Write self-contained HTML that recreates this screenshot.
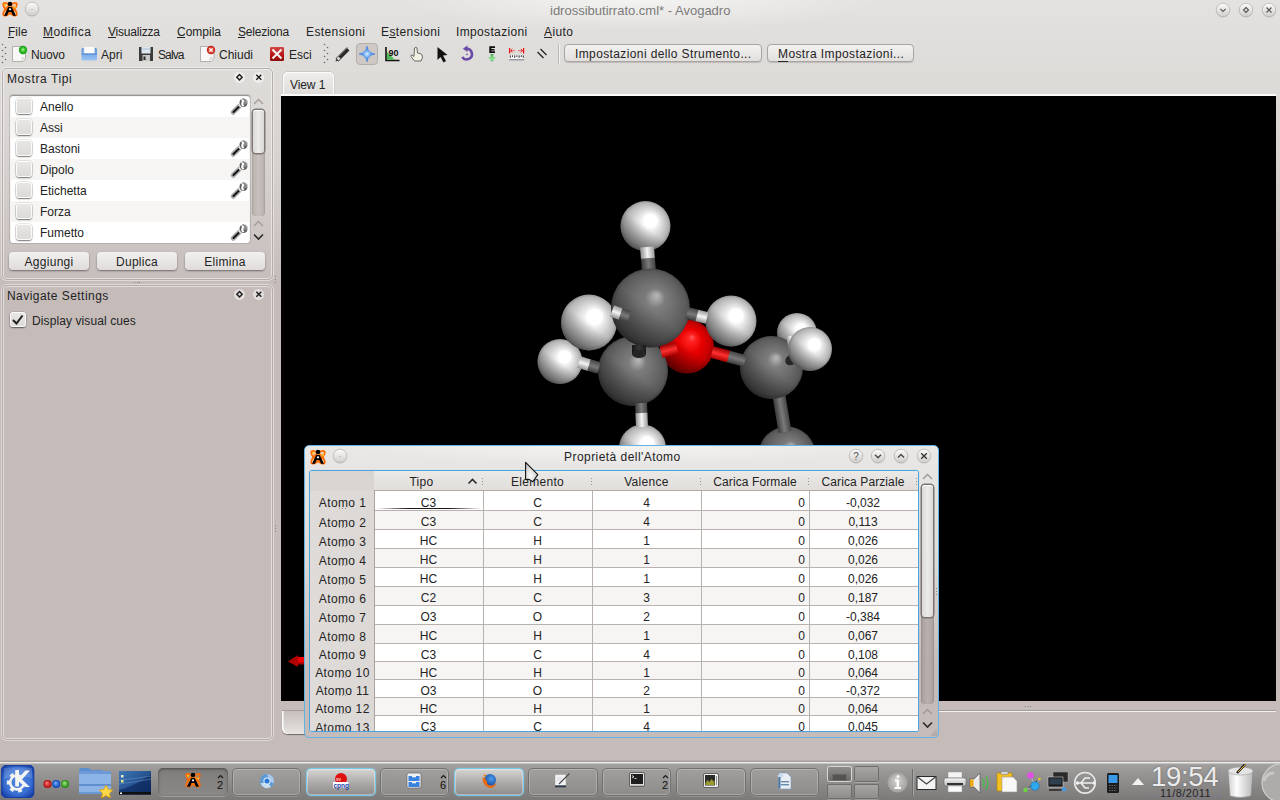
<!DOCTYPE html>
<html><head><meta charset="utf-8">
<style>
*{margin:0;padding:0;box-sizing:border-box}
html,body{width:1280px;height:800px;overflow:hidden}
body{position:relative;font-family:"Liberation Sans",sans-serif;font-size:12px;color:#232323;
background:linear-gradient(to bottom,#e3e2e0 0px,#dcd9d6 100px,#d6d1ce 170px,#c5bcba 290px,#c5bcba 800px);}
.a{position:absolute}
.t{position:absolute;white-space:nowrap;line-height:1}
.wbtn{position:absolute;width:14px;height:14px;border-radius:50%;
background:radial-gradient(circle at 50% 35%,#fbfbfb 0,#e8e6e4 45%,#bdbab7 100%);box-shadow:0 1px 1px rgba(0,0,0,.25)}
.btn{position:absolute;border:1px solid #a9a5a2;border-radius:4px;background:linear-gradient(#f3f2f1,#e2dfdd);box-shadow:0 1px 1px rgba(0,0,0,.15)}
.btn2{position:absolute;border-radius:4px;background:linear-gradient(#f2f1f0,#dedbd9);box-shadow:0 1px 2px rgba(0,0,0,.45)}
.panel{position:absolute;border:1px solid #c0b9b6;border-radius:4px;box-shadow:inset 0 1px 0 rgba(255,255,255,.6)}
.cb{position:absolute;width:15px;height:15px;border-radius:3.5px;background:linear-gradient(#e9e7e5,#dcd9d7);box-shadow:inset 0 0 0 1px rgba(255,255,255,.85),0 1px 1.5px rgba(0,0,0,.5),0 0 0 .5px rgba(0,0,0,.15)}
.ul{position:absolute;height:1px;background:#232323}
.tb{position:absolute;background:linear-gradient(#a19e9c,#7b7978)}

</style></head><body>
<!-- ===== Title bar ===== -->
<div class="a" style="left:400px;top:0;width:480px;height:30px;background:radial-gradient(ellipse 50% 100% at 50% 0,rgba(255,255,255,.6),rgba(255,255,255,0))"></div>
<div class="t" style="left:550px;top:4px;font-size:13px;color:#7c7b7a">idrossibutirrato.cml* - Avogadro</div>
<svg class="a" style="left:0;top:0" width="20" height="18" viewBox="0 0 20 18"><ellipse cx="10" cy="9.2" rx="8.8" ry="3.3" transform="rotate(42 10 9.2)" fill="#ff9a30" fill-opacity=".35" stroke="#ff6a00" stroke-width="1.7"/>
<ellipse cx="10" cy="9.2" rx="8.8" ry="3.3" transform="rotate(-42 10 9.2)" fill="#ff9a30" fill-opacity=".35" stroke="#ff6a00" stroke-width="1.7"/>
<circle cx="10" cy="4" r="2.3" fill="#000"/>
<path d="M8.2 7 L4 15.8 H7 L8.6 12 H11.4 L13 15.8 H16 L11.8 7 Z" fill="#000"/>
<circle cx="10" cy="9.3" r="1.1" fill="#fff"/>
<circle cx="5" cy="4.8" r="1.1" fill="#ffc020"/><circle cx="15.2" cy="7.5" r="1.1" fill="#ffc020"/></svg>
<svg class="a" style="left:24.299999999999997px;top:1.3000000000000007px" width="16" height="17" viewBox="0 0 16 17"><defs><linearGradient id="wbg" x1="0" y1="0" x2="0" y2="1"><stop offset="0" stop-color="#fbfbfb"/><stop offset=".55" stop-color="#e4e2e0"/><stop offset="1" stop-color="#cfccca"/></linearGradient></defs><circle cx="8" cy="8.8" r="7" fill="#bdbab8" opacity=".45"/><circle cx="8" cy="8" r="6.8" fill="url(#wbg)" stroke="#b2afad" stroke-width=".7"/><circle cx="8" cy="8.5" r=".6" fill="#999"/></svg>
<svg class="a" style="left:1215px;top:1.5px" width="16" height="17" viewBox="0 0 16 17"><defs><linearGradient id="wbg" x1="0" y1="0" x2="0" y2="1"><stop offset="0" stop-color="#fbfbfb"/><stop offset=".55" stop-color="#e4e2e0"/><stop offset="1" stop-color="#cfccca"/></linearGradient></defs><circle cx="8" cy="8.8" r="7" fill="#bdbab8" opacity=".45"/><circle cx="8" cy="8" r="6.8" fill="url(#wbg)" stroke="#b2afad" stroke-width=".7"/><path d="M5.3 6.8 L8 9.5 L10.7 6.8" fill="none" stroke="#555" stroke-width="1.1"/></svg>
<svg class="a" style="left:1238px;top:1.5px" width="16" height="17" viewBox="0 0 16 17"><defs><linearGradient id="wbg" x1="0" y1="0" x2="0" y2="1"><stop offset="0" stop-color="#fbfbfb"/><stop offset=".55" stop-color="#e4e2e0"/><stop offset="1" stop-color="#cfccca"/></linearGradient></defs><circle cx="8" cy="8.8" r="7" fill="#bdbab8" opacity=".45"/><circle cx="8" cy="8" r="6.8" fill="url(#wbg)" stroke="#b2afad" stroke-width=".7"/><path d="M8 5.5 L10.5 8 L8 10.5 L5.5 8 Z" fill="none" stroke="#555" stroke-width="1.1"/></svg>
<svg class="a" style="left:1261px;top:1.5px" width="16" height="17" viewBox="0 0 16 17"><defs><linearGradient id="wbg" x1="0" y1="0" x2="0" y2="1"><stop offset="0" stop-color="#fbfbfb"/><stop offset=".55" stop-color="#e4e2e0"/><stop offset="1" stop-color="#cfccca"/></linearGradient></defs><circle cx="8" cy="8.8" r="7" fill="#bdbab8" opacity=".45"/><circle cx="8" cy="8" r="6.8" fill="url(#wbg)" stroke="#b2afad" stroke-width=".7"/><path d="M5.5 5.5 L10.5 10.5 M10.5 5.5 L5.5 10.5" fill="none" stroke="#555" stroke-width="1.1"/></svg>
<!-- ===== Menu ===== -->
<div class="t" style="left:8px;top:25.5px;letter-spacing:0px">File</div>
<div class="t" style="left:43px;top:25.5px;letter-spacing:0.45px">Modifica</div>
<div class="t" style="left:108px;top:25.5px;letter-spacing:-0.2px">Visualizza</div>
<div class="t" style="left:177px;top:25.5px;letter-spacing:0px">Compila</div>
<div class="t" style="left:238px;top:25.5px;letter-spacing:-0.2px">Seleziona</div>
<div class="t" style="left:306px;top:25.5px;letter-spacing:0.4px">Estensioni</div>
<div class="t" style="left:381px;top:25.5px;letter-spacing:0.4px">Estensioni</div>
<div class="t" style="left:456px;top:25.5px;letter-spacing:0.35px">Impostazioni</div>
<div class="t" style="left:544px;top:25.5px;letter-spacing:0.4px">Aiuto</div>
<div class="ul" style="left:8px;top:37px;width:6px"></div>
<div class="ul" style="left:43px;top:37px;width:11px"></div>
<div class="ul" style="left:108px;top:37px;width:8px"></div>
<div class="ul" style="left:177px;top:37px;width:8px"></div>
<div class="ul" style="left:238px;top:37px;width:7px"></div>
<div class="ul" style="left:389px;top:37px;width:7px"></div>
<div class="ul" style="left:544px;top:37px;width:8px"></div>
<!-- ===== Toolbar ===== -->
<svg class="a" style="left:0;top:40px" width="600" height="28" viewBox="0 40 600 28"><defs>
<radialGradient id="grn" cx=".5" cy=".5" r=".5" fx=".5" fy=".45"><stop offset="0" stop-color="#c9f0c0"/><stop offset=".35" stop-color="#4fd03a"/><stop offset="1" stop-color="#0c9a10"/></radialGradient>
<radialGradient id="red" cx=".5" cy=".5" r=".5"><stop offset="0" stop-color="#fff"/><stop offset=".3" stop-color="#f07050"/><stop offset="1" stop-color="#c01010"/></radialGradient>
<linearGradient id="blu" x1="0" y1="0" x2="0" y2="1"><stop offset="0" stop-color="#5c94de"/><stop offset="1" stop-color="#9cc4f4"/></linearGradient>
<linearGradient id="rbox" x1="0" y1="0" x2="0" y2="1"><stop offset="0" stop-color="#d04848"/><stop offset=".6" stop-color="#b81010"/><stop offset="1" stop-color="#8a0a0a"/></linearGradient>
<radialGradient id="star" cx=".5" cy=".5" r=".5"><stop offset="0" stop-color="#d8ecff"/><stop offset=".5" stop-color="#5aa0f0"/><stop offset="1" stop-color="#2a6ad8"/></radialGradient>
</defs><circle cx="2.5" cy="44.5" r="0.8" fill="#6f6b69"/><circle cx="2.5" cy="50.5" r="0.8" fill="#6f6b69"/><circle cx="2.5" cy="56.5" r="0.8" fill="#6f6b69"/><circle cx="2.5" cy="62.5" r="0.8" fill="#6f6b69"/><circle cx="5.5" cy="47.5" r="0.8" fill="#6f6b69"/><circle cx="5.5" cy="53.5" r="0.8" fill="#6f6b69"/><circle cx="5.5" cy="59.5" r="0.8" fill="#6f6b69"/><path d="M12.5 46.5 H22 L25.5 50 V58.5 L23 61.5 H12.5 Z" fill="#f8f8f8" stroke="#b0adab" stroke-width="1"/><path d="M21 61 L25 57 L22 57.5 Z" fill="#d0d0d0"/><circle cx="23" cy="50" r="4.2" fill="url(#grn)"/><rect x="81.5" y="48" width="15.5" height="12.5" rx="1.5" fill="url(#blu)"/><rect x="84" y="46.5" width="10.5" height="7" fill="#fbfbfb" stroke="#d8d8d8" stroke-width=".6"/><rect x="81.5" y="53.5" width="15.5" height="1" fill="#4a82d0"/><path d="M139 47 H153 V61 H139 Z" fill="#3a3a3a"/><rect x="141.5" y="47" width="9" height="6.5" fill="#dfe6ee"/><rect x="141.5" y="48.5" width="9" height="1" fill="#aac0d8"/><rect x="142.5" y="55" width="7.5" height="6" fill="#c8c8c8"/><rect x="143.5" y="56.5" width="2" height="3.5" fill="#2a2a2a"/><path d="M200.5 46.5 H209 L214 51 V58.5 L211 61.5 H200.5 Z" fill="#f8f8f8" stroke="#b0adab" stroke-width="1"/><path d="M209 61 L213.5 57 L210 57.5 Z" fill="#d0d0d0"/><circle cx="211" cy="50" r="4.2" fill="url(#red)"/><path d="M209.3 48.3 L212.7 51.7 M212.7 48.3 L209.3 51.7" stroke="#fff" stroke-width="1.2"/><rect x="270" y="47" width="14" height="14" rx="1.2" fill="url(#rbox)"/><path d="M272.5 49.5 L281.5 58.5 M281.5 49.5 L272.5 58.5" stroke="#f2f2f2" stroke-width="2.2"/><circle cx="324.5" cy="44.5" r="0.8" fill="#6f6b69"/><circle cx="324.5" cy="50.5" r="0.8" fill="#6f6b69"/><circle cx="324.5" cy="56.5" r="0.8" fill="#6f6b69"/><circle cx="324.5" cy="62.5" r="0.8" fill="#6f6b69"/><circle cx="327.5" cy="47.5" r="0.8" fill="#6f6b69"/><circle cx="327.5" cy="53.5" r="0.8" fill="#6f6b69"/><circle cx="327.5" cy="59.5" r="0.8" fill="#6f6b69"/><path d="M337 60 L348 49" stroke="#2a2a2a" stroke-width="4" /><path d="M335.5 61.5 L338.5 60.8 L336.2 58.5 Z" fill="#3a3a3a"/><path d="M337.5 59.5 L339.5 57.5" stroke="#d8d8d8" stroke-width="3"/><path d="M338 57 L347.5 47.5" stroke="#707070" stroke-width="1"/><rect x="356.5" y="43.5" width="21" height="21" rx="3.5" fill="#cfc9c6" stroke="#b5afac" stroke-width="1"/><path d="M367 46 Q368 53 375 54 Q368 55 367 62 Q366 55 359 54 Q366 53 367 46 Z" fill="url(#star)" stroke="#3a78e0" stroke-width=".5"/><path d="M386 47 V60.5 H399.5" fill="none" stroke="#111" stroke-width="1.6"/><path d="M387 52 L395 59.8 H387 Z" fill="#4cbb55"/><text x="388.5" y="56" font-family="Liberation Sans" font-weight="bold" font-size="9" fill="#111">90</text><path d="M414.5 48 Q416 46.5 417 48 L417.5 53 L420 53.5 Q423 54.5 422.5 57.5 L421 61 H414.5 L411 56.5 Q410.5 55 412 55 L414 56.5 Z" fill="#f4f0e2" stroke="#5a5a5a" stroke-width=".9"/><path d="M437.5 47 L437.5 60 L440.5 57 L443.5 62.5 L446 61 L443 55.5 L447.5 55 Z" fill="#111"/><path d="M466 48.8 A5.3 5.3 0 1 1 462.2 57" fill="none" stroke="#6a4aa8" stroke-width="2.6"/><path d="M462.8 48.8 L467.5 45.6 L467.5 52 Z" fill="#6a4aa8"/><circle cx="467" cy="54.3" r="0.9" fill="#6a4aa8"/><path d="M489.3 46.3 H495 V48 H491.3 V48.9 H494.5 V50.4 H491.3 V51.3 H495 V53 H489.3 Z" fill="#0a0a0a"/><defs><linearGradient id="garr" x1="0" y1="0" x2="0" y2="1"><stop offset="0" stop-color="#5aa860"/><stop offset=".7" stop-color="#8ce890"/><stop offset="1" stop-color="#2a7a30"/></linearGradient></defs><path d="M490.5 54 H493.5 V57.3 H496 L492 61.8 L488 57.3 H490.5 Z" fill="url(#garr)"/><path d="M509.6 48 V53.5 M523.6 48 V53.5" stroke="#e81010" stroke-width="1.2"/><path d="M510.5 50.7 H515.2 M518 50.7 H522.8" stroke="#e86a6a" stroke-width="1"/><path d="M512.3 49 L510.6 50.7 L512.3 52.4 M520.9 49 L522.6 50.7 L520.9 52.4" fill="none" stroke="#e81010" stroke-width="1"/><rect x="509" y="55" width="15.2" height="4" fill="#f4f4f4"/><path d="M510.3 55.3 V57.8 M512.5 55.3 V57 M514.7 55.3 V57.8 M516.9 55.3 V57 M519.1 55.3 V57.8 M521.3 55.3 V57 M523.3 55.3 V57.8" stroke="#222" stroke-width=".9"/><rect x="509" y="59" width="15.2" height="1.5" fill="#9a9aa2"/><path d="M537.5 52 L543.5 58 M540.5 49 L546.5 55" stroke="#222" stroke-width="1.3"/><rect x="558" y="44" width="1" height="20" fill="#bfbab7"/><rect x="559" y="44" width="1" height="20" fill="#f2f0ee"/></svg>
<div class="t" style="left:31px;top:49px;letter-spacing:-.2px">Nuovo</div>
<div class="t" style="left:101px;top:49px">Apri</div>
<div class="t" style="left:158px;top:49px;letter-spacing:-.9px">Salva</div>
<div class="t" style="left:219px;top:49px">Chiudi</div>
<div class="t" style="left:289px;top:49px">Esci</div>
<div class="btn" style="left:564px;top:44px;width:198px;height:18px"></div>
<div class="t" style="left:575px;top:48px;letter-spacing:.38px">Impostazioni dello Strumento...</div>
<div class="btn" style="left:767px;top:44px;width:147px;height:18px"></div>
<div class="t" style="left:778px;top:48px;letter-spacing:.4px">Mostra Impostazioni...</div>
<div class="ul" style="left:778px;top:61px;width:10px"></div>
<!-- ===== Left docks ===== -->
<div class="a" style="left:2px;top:68px;width:271px;height:212px;border-radius:5px;border:1px solid #b4acaa;box-shadow:inset 0 0 0 1px rgba(255,255,255,.5),0 0 0 1px rgba(255,255,255,.45)"></div>
<div class="t" style="left:7px;top:73px;font-size:12px;letter-spacing:.6px">Mostra Tipi</div>
<div class="a" style="left:234px;top:71.5px;width:11px;height:11px;border-radius:50%;background:radial-gradient(circle,rgba(255,255,255,.35) 0,rgba(255,255,255,.55) 65%,rgba(255,255,255,0) 100%)"></div>
<div class="a" style="left:253px;top:71.5px;width:11px;height:11px;border-radius:50%;background:radial-gradient(circle,rgba(255,255,255,.35) 0,rgba(255,255,255,.55) 65%,rgba(255,255,255,0) 100%)"></div>
<svg class="a" style="left:234px;top:71.5px" width="30" height="11"><path d="M5.5 2.5 L8.2 5.3 L5.5 8.1 L2.8 5.3 Z" fill="none" stroke="#1c1c1c" stroke-width="1.4"/><path d="M22.3 2.8 L27.3 7.8 M27.3 2.8 L22.3 7.8" stroke="#1c1c1c" stroke-width="1.4"/></svg>
<div class="a" style="left:10px;top:95px;width:240px;height:148px;border-radius:3px;background:#fff;box-shadow:inset 0 1px 1px rgba(0,0,0,.45),0 0 0 1px rgba(120,110,106,.25)"></div>
<div class="cb" style="left:15.5px;top:97.5px;width:16px;height:16px"></div>
<div class="t" style="left:40px;top:101px">Anello</div>
<svg class="a" style="left:228px;top:96px" width="24" height="22" viewBox="0 0 24 22"><path d="M5.2 16.3 L11.3 10.3" stroke="#a8a8a8" stroke-width="5" stroke-linecap="round"/><path d="M5.5 16 L11 10.6" stroke="#141414" stroke-width="2" stroke-linecap="round"/><path d="M11.3 10.5 L13 8.8" stroke="#e8e8e8" stroke-width="3"/><circle cx="15.6" cy="6.6" r="4.2" fill="#8a8a8a"/><path d="M12.2 4.5 Q13.5 2.2 16 2.4 L14.6 4.4 Q16.5 6 14.8 8.2 Q17 9 18.6 7.6 Q19.5 9.5 17.4 10.5 Q14 11.3 12.6 9.2 Q11.3 7 12.2 4.5 Z" fill="#5a5a5a"/><path d="M14.2 3 Q17.2 4.2 15.6 6.6 Q14.4 8.6 16.4 9.6 L15 10.6 Q12.4 9 13.4 6.4 Q14.6 4.6 13 3.6 Z" fill="#fafafa"/><path d="M17.6 2.8 Q19.8 4.4 19.6 7" fill="none" stroke="#d0d0d0" stroke-width="1"/></svg>
<div class="a" style="left:11px;top:117px;width:238px;height:21px;background:#f6f5f4"></div>
<div class="cb" style="left:15.5px;top:118.5px;width:16px;height:16px"></div>
<div class="t" style="left:40px;top:122px">Assi</div>
<div class="cb" style="left:15.5px;top:139.5px;width:16px;height:16px"></div>
<div class="t" style="left:40px;top:143px">Bastoni</div>
<svg class="a" style="left:228px;top:138px" width="24" height="22" viewBox="0 0 24 22"><path d="M5.2 16.3 L11.3 10.3" stroke="#a8a8a8" stroke-width="5" stroke-linecap="round"/><path d="M5.5 16 L11 10.6" stroke="#141414" stroke-width="2" stroke-linecap="round"/><path d="M11.3 10.5 L13 8.8" stroke="#e8e8e8" stroke-width="3"/><circle cx="15.6" cy="6.6" r="4.2" fill="#8a8a8a"/><path d="M12.2 4.5 Q13.5 2.2 16 2.4 L14.6 4.4 Q16.5 6 14.8 8.2 Q17 9 18.6 7.6 Q19.5 9.5 17.4 10.5 Q14 11.3 12.6 9.2 Q11.3 7 12.2 4.5 Z" fill="#5a5a5a"/><path d="M14.2 3 Q17.2 4.2 15.6 6.6 Q14.4 8.6 16.4 9.6 L15 10.6 Q12.4 9 13.4 6.4 Q14.6 4.6 13 3.6 Z" fill="#fafafa"/><path d="M17.6 2.8 Q19.8 4.4 19.6 7" fill="none" stroke="#d0d0d0" stroke-width="1"/></svg>
<div class="a" style="left:11px;top:159px;width:238px;height:21px;background:#f6f5f4"></div>
<div class="cb" style="left:15.5px;top:160.5px;width:16px;height:16px"></div>
<div class="t" style="left:40px;top:164px">Dipolo</div>
<svg class="a" style="left:228px;top:159px" width="24" height="22" viewBox="0 0 24 22"><path d="M5.2 16.3 L11.3 10.3" stroke="#a8a8a8" stroke-width="5" stroke-linecap="round"/><path d="M5.5 16 L11 10.6" stroke="#141414" stroke-width="2" stroke-linecap="round"/><path d="M11.3 10.5 L13 8.8" stroke="#e8e8e8" stroke-width="3"/><circle cx="15.6" cy="6.6" r="4.2" fill="#8a8a8a"/><path d="M12.2 4.5 Q13.5 2.2 16 2.4 L14.6 4.4 Q16.5 6 14.8 8.2 Q17 9 18.6 7.6 Q19.5 9.5 17.4 10.5 Q14 11.3 12.6 9.2 Q11.3 7 12.2 4.5 Z" fill="#5a5a5a"/><path d="M14.2 3 Q17.2 4.2 15.6 6.6 Q14.4 8.6 16.4 9.6 L15 10.6 Q12.4 9 13.4 6.4 Q14.6 4.6 13 3.6 Z" fill="#fafafa"/><path d="M17.6 2.8 Q19.8 4.4 19.6 7" fill="none" stroke="#d0d0d0" stroke-width="1"/></svg>
<div class="cb" style="left:15.5px;top:181.5px;width:16px;height:16px"></div>
<div class="t" style="left:40px;top:185px">Etichetta</div>
<svg class="a" style="left:228px;top:180px" width="24" height="22" viewBox="0 0 24 22"><path d="M5.2 16.3 L11.3 10.3" stroke="#a8a8a8" stroke-width="5" stroke-linecap="round"/><path d="M5.5 16 L11 10.6" stroke="#141414" stroke-width="2" stroke-linecap="round"/><path d="M11.3 10.5 L13 8.8" stroke="#e8e8e8" stroke-width="3"/><circle cx="15.6" cy="6.6" r="4.2" fill="#8a8a8a"/><path d="M12.2 4.5 Q13.5 2.2 16 2.4 L14.6 4.4 Q16.5 6 14.8 8.2 Q17 9 18.6 7.6 Q19.5 9.5 17.4 10.5 Q14 11.3 12.6 9.2 Q11.3 7 12.2 4.5 Z" fill="#5a5a5a"/><path d="M14.2 3 Q17.2 4.2 15.6 6.6 Q14.4 8.6 16.4 9.6 L15 10.6 Q12.4 9 13.4 6.4 Q14.6 4.6 13 3.6 Z" fill="#fafafa"/><path d="M17.6 2.8 Q19.8 4.4 19.6 7" fill="none" stroke="#d0d0d0" stroke-width="1"/></svg>
<div class="a" style="left:11px;top:201px;width:238px;height:21px;background:#f6f5f4"></div>
<div class="cb" style="left:15.5px;top:202.5px;width:16px;height:16px"></div>
<div class="t" style="left:40px;top:206px">Forza</div>
<div class="cb" style="left:15.5px;top:223.5px;width:16px;height:16px"></div>
<div class="t" style="left:40px;top:227px">Fumetto</div>
<svg class="a" style="left:228px;top:222px" width="24" height="22" viewBox="0 0 24 22"><path d="M5.2 16.3 L11.3 10.3" stroke="#a8a8a8" stroke-width="5" stroke-linecap="round"/><path d="M5.5 16 L11 10.6" stroke="#141414" stroke-width="2" stroke-linecap="round"/><path d="M11.3 10.5 L13 8.8" stroke="#e8e8e8" stroke-width="3"/><circle cx="15.6" cy="6.6" r="4.2" fill="#8a8a8a"/><path d="M12.2 4.5 Q13.5 2.2 16 2.4 L14.6 4.4 Q16.5 6 14.8 8.2 Q17 9 18.6 7.6 Q19.5 9.5 17.4 10.5 Q14 11.3 12.6 9.2 Q11.3 7 12.2 4.5 Z" fill="#5a5a5a"/><path d="M14.2 3 Q17.2 4.2 15.6 6.6 Q14.4 8.6 16.4 9.6 L15 10.6 Q12.4 9 13.4 6.4 Q14.6 4.6 13 3.6 Z" fill="#fafafa"/><path d="M17.6 2.8 Q19.8 4.4 19.6 7" fill="none" stroke="#d0d0d0" stroke-width="1"/></svg>
<svg class="a" style="left:252px;top:97px" width="13" height="9"><path d="M2 7 L6.5 2.5 L11 7" fill="none" stroke="#a39d9a" stroke-width="1.3"/></svg>
<div class="a" style="left:252px;top:109px;width:13px;height:107px;border-radius:4px;background:linear-gradient(90deg,#b9b1ae,#c7c0bd 50%,#b9b1ae);box-shadow:inset 0 1px 2px rgba(0,0,0,.3)"></div>
<div class="a" style="left:253px;top:110px;width:11px;height:43px;border-radius:3px;background:linear-gradient(90deg,#dcd9d6,#ecebea 50%,#dad7d4);box-shadow:0 0 0 1.5px #7e7977,inset 0 1px 0 #fff"></div>
<svg class="a" style="left:252px;top:219px" width="13" height="9"><path d="M2 7 L6.5 2.5 L11 7" fill="none" stroke="#a39d9a" stroke-width="1.3"/></svg>
<svg class="a" style="left:252px;top:232px" width="13" height="9"><path d="M2 2.5 L6.5 7 L11 2.5" fill="none" stroke="#2b2b2b" stroke-width="1.6"/></svg>
<div class="btn2" style="left:9px;top:252px;width:80px;height:18px"></div>
<div class="t" style="left:9px;top:256px;width:80px;text-align:center;letter-spacing:.3px">Aggiungi</div>
<div class="btn2" style="left:97px;top:252px;width:80px;height:18px"></div>
<div class="t" style="left:97px;top:256px;width:80px;text-align:center;letter-spacing:.3px">Duplica</div>
<div class="btn2" style="left:185px;top:252px;width:80px;height:18px"></div>
<div class="t" style="left:185px;top:256px;width:80px;text-align:center;letter-spacing:.3px">Elimina</div>
<div class="a" style="left:134px;top:282px;width:6px;height:1px;background:repeating-linear-gradient(90deg,#8c8683 0 1px,transparent 1px 2.5px)"></div>
<div class="a" style="left:2px;top:285px;width:271px;height:455px;border-radius:5px;border:1px solid #b4acaa;box-shadow:inset 0 0 0 1px rgba(255,255,255,.5),0 0 0 1px rgba(255,255,255,.45)"></div>
<div class="t" style="left:7px;top:290px;font-size:12px;letter-spacing:.45px">Navigate Settings</div>
<div class="a" style="left:234px;top:288.5px;width:11px;height:11px;border-radius:50%;background:radial-gradient(circle,rgba(255,255,255,.35) 0,rgba(255,255,255,.55) 65%,rgba(255,255,255,0) 100%)"></div>
<div class="a" style="left:253px;top:288.5px;width:11px;height:11px;border-radius:50%;background:radial-gradient(circle,rgba(255,255,255,.35) 0,rgba(255,255,255,.55) 65%,rgba(255,255,255,0) 100%)"></div>
<svg class="a" style="left:234px;top:288.5px" width="30" height="11"><path d="M5.5 2.5 L8.2 5.3 L5.5 8.1 L2.8 5.3 Z" fill="none" stroke="#1c1c1c" stroke-width="1.4"/><path d="M22.3 2.8 L27.3 7.8 M27.3 2.8 L22.3 7.8" stroke="#1c1c1c" stroke-width="1.4"/></svg>
<div class="cb" style="left:9.5px;top:312px;width:16px;height:15px"></div>
<svg class="a" style="left:9px;top:311px" width="17" height="17"><path d="M4 9 L7.5 12.5 L13.5 4.5" fill="none" stroke="#1e1e1e" stroke-width="2"/></svg>
<div class="t" style="left:32px;top:315px;letter-spacing:.1px">Display visual cues</div>
<div class="a" style="left:275px;top:525px;width:1px;height:8px;background:repeating-linear-gradient(#8c8683 0 1px,transparent 1px 3px)"></div>
<div class="a" style="left:275px;top:276px;width:1px;height:8px;background:repeating-linear-gradient(#8c8683 0 1px,transparent 1px 3px)"></div>
<!-- ===== View tab + GL view ===== -->
<div class="a" style="left:283px;top:72px;width:51px;height:24px;border-radius:5px 5px 0 0;background:linear-gradient(#efeeed,#dedbd8);box-shadow:inset 1px 1px 0 #fbfbfb,inset -1px 0 0 #fbfbfb,-0.5px -0.5px 0 #c4bfbc,0.5px -0.5px 0 #c4bfbc"></div>
<div class="t" style="left:290px;top:79px;letter-spacing:-.1px">View 1</div>
<div class="a" style="left:281px;top:94px;width:995px;height:2px;background:#fbfbfb"></div>
<div class="a" style="left:281px;top:96px;width:995px;height:605px;background:#000"></div>
<div class="a" style="left:1025px;top:706px;width:6px;height:1px;background:repeating-linear-gradient(90deg,#8c8683 0 1px,transparent 1px 2.5px)"></div>
<div class="a" style="left:282px;top:710px;width:994px;height:1px;background:#a49c99"></div>
<div class="a" style="left:282px;top:711px;width:994px;height:1px;background:#f4f2f1"></div>
<div class="a" style="left:282px;top:711px;width:60px;height:23px;border-radius:0 0 0 6px;background:linear-gradient(#c6bfbc,#e6e3e1);box-shadow:inset 1.5px 0 0 #fdfdfd,0 1px 1px rgba(0,0,0,.45)"></div>
<!-- ===== Molecule ===== -->
<svg class="a" style="left:281px;top:96px" width="995" height="605" viewBox="281 96 995 605">
<defs>
<radialGradient id="gC" cx="0.5" cy="0.5" r="0.5" fx="0.58" fy="0.34">
<stop offset="0" stop-color="#b8b8b8"/><stop offset="0.1" stop-color="#a2a2a2"/><stop offset="0.25" stop-color="#7c7c7c"/><stop offset="0.6" stop-color="#6a6a6a"/><stop offset="0.9" stop-color="#595959"/><stop offset="1" stop-color="#464646"/></radialGradient>
<radialGradient id="gH" cx="0.5" cy="0.5" r="0.5" fx="0.64" fy="0.36">
<stop offset="0" stop-color="#ffffff"/><stop offset="0.26" stop-color="#ffffff"/><stop offset="0.36" stop-color="#eeeeee"/><stop offset="0.62" stop-color="#d0d0d0"/><stop offset="0.88" stop-color="#b4b4b4"/><stop offset="1" stop-color="#909090"/></radialGradient>
<radialGradient id="gO" cx="0.5" cy="0.5" r="0.5" fx="0.6" fy="0.32">
<stop offset="0" stop-color="#ff5a5a"/><stop offset="0.15" stop-color="#ff2020"/><stop offset="0.45" stop-color="#e80000"/><stop offset="0.8" stop-color="#c80000"/><stop offset="1" stop-color="#9a0000"/></radialGradient>
<linearGradient id="shd" x1="0.78" y1="0.18" x2="0.2" y2="0.95"><stop offset="0" stop-color="#000" stop-opacity="0"/><stop offset="0.45" stop-color="#000" stop-opacity="0"/><stop offset="1" stop-color="#000" stop-opacity="0.5"/></linearGradient>
<linearGradient id="bW" x1="0" y1="0" x2="1" y2="0"><stop offset="0" stop-color="#8e8e8e"/><stop offset="0.5" stop-color="#f4f4f4"/><stop offset="1" stop-color="#9a9a9a"/></linearGradient>
<linearGradient id="bG" x1="0" y1="0" x2="1" y2="0"><stop offset="0" stop-color="#3a3a3a"/><stop offset="0.5" stop-color="#7a7a7a"/><stop offset="1" stop-color="#444"/></linearGradient>
<linearGradient id="bD" x1="0" y1="0" x2="1" y2="0"><stop offset="0" stop-color="#161616"/><stop offset="0.5" stop-color="#363636"/><stop offset="1" stop-color="#1a1a1a"/></linearGradient>
<linearGradient id="bR" x1="0" y1="0" x2="1" y2="0"><stop offset="0" stop-color="#a00"/><stop offset="0.5" stop-color="#ff3030"/><stop offset="1" stop-color="#900"/></linearGradient>
</defs>
<circle cx="787" cy="455" r="28.5" fill="url(#gC)"/><circle cx="787" cy="455" r="28.5" fill="url(#shd)"/>
<g transform="translate(779,396) rotate(-9.46)"><rect x="-6.5" y="0" width="13" height="36.50" fill="url(#bG)"/></g>
<circle cx="642.5" cy="448" r="23.5" fill="url(#gH)"/><circle cx="642.5" cy="448" r="23.5" fill="url(#shd)"/>
<circle cx="797" cy="333" r="20" fill="url(#gH)"/><circle cx="797" cy="333" r="20" fill="url(#shd)"/>
<circle cx="560" cy="361.5" r="22.5" fill="url(#gH)"/><circle cx="560" cy="361.5" r="22.5" fill="url(#shd)"/>
<circle cx="687" cy="346.5" r="27" fill="url(#gO)"/><circle cx="687" cy="346.5" r="27" fill="url(#shd)"/>
<circle cx="633" cy="371" r="35" fill="url(#gC)"/><circle cx="633" cy="371" r="35" fill="url(#shd)"/>
<circle cx="589" cy="322.5" r="28" fill="url(#gH)"/><circle cx="589" cy="322.5" r="28" fill="url(#shd)"/>
<circle cx="645.5" cy="226" r="25" fill="url(#gH)"/><circle cx="645.5" cy="226" r="25" fill="url(#shd)"/>
<g transform="translate(647,247) rotate(-4.57)"><rect x="-7.0" y="0" width="14" height="11.79" fill="url(#bW)"/><rect x="-7.0" y="11.29" width="14" height="13.79" fill="url(#bG)"/></g>
<circle cx="650.5" cy="308" r="39.5" fill="url(#gC)"/><circle cx="650.5" cy="308" r="39.5" fill="url(#shd)"/>
<circle cx="771.5" cy="367.5" r="31.5" fill="url(#gC)"/><circle cx="771.5" cy="367.5" r="31.5" fill="url(#shd)"/>
<g transform="translate(790,336) rotate(-12.09)"><rect x="-4.0" y="0" width="8" height="14.32" fill="url(#bW)"/></g>
<circle cx="731" cy="321" r="25.5" fill="url(#gH)"/><circle cx="731" cy="321" r="25.5" fill="url(#shd)"/>
<ellipse cx="791" cy="360" rx="6" ry="5" transform="rotate(-35 791 360)" fill="#262626"/>
<circle cx="810" cy="349" r="22" fill="url(#gH)"/><circle cx="810" cy="349" r="22" fill="url(#shd)"/>
<g transform="translate(612,311) rotate(-70.56)"><rect x="-6.0" y="0" width="12" height="9.51" fill="url(#bW)"/><rect x="-6.0" y="9.01" width="12" height="9.01" fill="url(#bG)"/></g>
<g transform="translate(579,362) rotate(-73.30)"><rect x="-6.0" y="0" width="12" height="10.94" fill="url(#bW)"/><rect x="-6.0" y="10.44" width="12" height="10.44" fill="url(#bG)"/></g>
<g transform="translate(639,345) rotate(0.00)"><rect x="-7.0" y="0" width="14" height="9.00" fill="url(#bD)"/></g>
<ellipse cx="639" cy="354" rx="7" ry="4" fill="#242424"/>
<g transform="translate(641,403) rotate(-2.39)"><rect x="-6.0" y="0" width="12" height="10.59" fill="url(#bG)"/><rect x="-6.0" y="10.09" width="12" height="13.93" fill="url(#bW)"/></g>
<g transform="translate(661,352) rotate(-104.04)"><rect x="-6.0" y="0" width="12" height="16.49" fill="url(#bR)"/></g>
<g transform="translate(687,313) rotate(-75.96)"><rect x="-6.0" y="0" width="12" height="10.81" fill="url(#bG)"/><rect x="-6.0" y="10.31" width="12" height="10.31" fill="url(#bW)"/></g>
<g transform="translate(712,352) rotate(-74.74)"><rect x="-6.0" y="0" width="12" height="17.60" fill="url(#bR)"/><rect x="-6.0" y="17.10" width="12" height="17.10" fill="url(#bG)"/></g>
<path d="M288 661.5 L298 655 L298 657.5 L304 657.5 L304 664.5 L298 664.5 L298 667 Z" fill="#b00000"/>
<rect x="298" y="657" width="6" height="5" fill="#f00000"/>
</svg>
<!-- ===== Dialog ===== -->
<div class="a" style="left:304px;top:445px;width:635px;height:293px;border:1px solid #62b2e4;border-radius:5px;background:linear-gradient(#e9e8e6 0,#dedbd8 110px,#c5bcba 220px)"></div>
<div class="a" style="left:305px;top:446px;width:633px;height:22px;border-radius:4px 4px 0 0;background:radial-gradient(ellipse at 50% 0,rgba(255,255,255,.5),rgba(255,255,255,0) 60%)"></div>
<div class="t" style="left:564px;top:451px;letter-spacing:.45px">Proprietà dell'Atomo</div>
<svg class="a" style="left:308px;top:448px" width="20" height="18" viewBox="0 0 20 18"><ellipse cx="10" cy="9.2" rx="8.8" ry="3.3" transform="rotate(42 10 9.2)" fill="#ff9a30" fill-opacity=".35" stroke="#ff6a00" stroke-width="1.7"/>
<ellipse cx="10" cy="9.2" rx="8.8" ry="3.3" transform="rotate(-42 10 9.2)" fill="#ff9a30" fill-opacity=".35" stroke="#ff6a00" stroke-width="1.7"/>
<circle cx="10" cy="4" r="2.3" fill="#000"/>
<path d="M8.2 7 L4 15.8 H7 L8.6 12 H11.4 L13 15.8 H16 L11.8 7 Z" fill="#000"/>
<circle cx="10" cy="9.3" r="1.1" fill="#fff"/>
<circle cx="5" cy="4.8" r="1.1" fill="#ffc020"/><circle cx="15.2" cy="7.5" r="1.1" fill="#ffc020"/></svg>
<svg class="a" style="left:332px;top:448px" width="16" height="17" viewBox="0 0 16 17"><defs><linearGradient id="wbg2" x1="0" y1="0" x2="0" y2="1"><stop offset="0" stop-color="#fbfbfb"/><stop offset=".55" stop-color="#e4e2e0"/><stop offset="1" stop-color="#cfccca"/></linearGradient></defs><circle cx="8" cy="8.8" r="7" fill="#bdbab8" opacity=".45"/><circle cx="8" cy="8" r="6.8" fill="url(#wbg2)" stroke="#b2afad" stroke-width=".7"/><circle cx="8" cy="8.5" r=".6" fill="#999"/></svg>
<svg class="a" style="left:847.5px;top:448px" width="16" height="17" viewBox="0 0 16 17"><defs><linearGradient id="wbg2" x1="0" y1="0" x2="0" y2="1"><stop offset="0" stop-color="#fbfbfb"/><stop offset=".55" stop-color="#e4e2e0"/><stop offset="1" stop-color="#cfccca"/></linearGradient></defs><circle cx="8" cy="8.8" r="7" fill="#bdbab8" opacity=".45"/><circle cx="8" cy="8" r="6.8" fill="url(#wbg2)" stroke="#b2afad" stroke-width=".7"/><text x="8" y="11.5" text-anchor="middle" font-family="Liberation Sans" font-size="10" fill="#555">?</text></svg>
<svg class="a" style="left:870px;top:448px" width="16" height="17" viewBox="0 0 16 17"><defs><linearGradient id="wbg2" x1="0" y1="0" x2="0" y2="1"><stop offset="0" stop-color="#fbfbfb"/><stop offset=".55" stop-color="#e4e2e0"/><stop offset="1" stop-color="#cfccca"/></linearGradient></defs><circle cx="8" cy="8.8" r="7" fill="#bdbab8" opacity=".45"/><circle cx="8" cy="8" r="6.8" fill="url(#wbg2)" stroke="#b2afad" stroke-width=".7"/><path d="M5 6.8 L8 9.8 L11 6.8" fill="none" stroke="#444" stroke-width="1.3"/></svg>
<svg class="a" style="left:893px;top:448px" width="16" height="17" viewBox="0 0 16 17"><defs><linearGradient id="wbg2" x1="0" y1="0" x2="0" y2="1"><stop offset="0" stop-color="#fbfbfb"/><stop offset=".55" stop-color="#e4e2e0"/><stop offset="1" stop-color="#cfccca"/></linearGradient></defs><circle cx="8" cy="8.8" r="7" fill="#bdbab8" opacity=".45"/><circle cx="8" cy="8" r="6.8" fill="url(#wbg2)" stroke="#b2afad" stroke-width=".7"/><path d="M5 9.5 L8 6.5 L11 9.5" fill="none" stroke="#444" stroke-width="1.3"/></svg>
<svg class="a" style="left:916px;top:448px" width="16" height="17" viewBox="0 0 16 17"><defs><linearGradient id="wbg2" x1="0" y1="0" x2="0" y2="1"><stop offset="0" stop-color="#fbfbfb"/><stop offset=".55" stop-color="#e4e2e0"/><stop offset="1" stop-color="#cfccca"/></linearGradient></defs><circle cx="8" cy="8.8" r="7" fill="#bdbab8" opacity=".45"/><circle cx="8" cy="8" r="6.8" fill="url(#wbg2)" stroke="#b2afad" stroke-width=".7"/><path d="M5.2 5.2 L10.8 10.8 M10.8 5.2 L5.2 10.8" fill="none" stroke="#333" stroke-width="1.3"/></svg>
<div class="a" style="left:309px;top:470px;width:610px;height:262px;border:1px solid #4aa3dd;border-radius:3px;box-shadow:0 0 1px #8cc8ee;background:#fff;overflow:hidden">
<div class="a" style="left:0;top:0;width:64px;height:20px;background:#d9d5d2"></div>
<div class="a" style="left:64px;top:0;width:545px;height:20px;background:linear-gradient(#ebe9e7,#e0ddda)"></div>
<div class="a" style="left:64px;top:19px;width:545px;height:1px;background:#b3aca8"></div>
<div class="a" style="left:0;top:20px;width:64px;height:240px;background:linear-gradient(90deg,#dfdbd8,#dcd8d5)"></div>
<div class="t" style="left:57px;top:5px;width:109px;text-align:center;letter-spacing:.3px">Tipo</div>
<div class="a" style="left:172px;top:7px;width:1px;height:9px;background:repeating-linear-gradient(#9a9592 0 1px,transparent 1px 3px)"></div>
<div class="t" style="left:173px;top:5px;width:109px;text-align:center;letter-spacing:.3px">Elemento</div>
<div class="a" style="left:281px;top:7px;width:1px;height:9px;background:repeating-linear-gradient(#9a9592 0 1px,transparent 1px 3px)"></div>
<div class="t" style="left:282px;top:5px;width:109px;text-align:center;letter-spacing:.3px">Valence</div>
<div class="a" style="left:390px;top:7px;width:1px;height:9px;background:repeating-linear-gradient(#9a9592 0 1px,transparent 1px 3px)"></div>
<div class="t" style="left:391px;top:5px;width:108px;text-align:center;letter-spacing:.1px">Carica Formale</div>
<div class="a" style="left:498px;top:7px;width:1px;height:9px;background:repeating-linear-gradient(#9a9592 0 1px,transparent 1px 3px)"></div>
<div class="t" style="left:499px;top:5px;width:108px;text-align:center;letter-spacing:.1px">Carica Parziale</div>
<div class="a" style="left:606px;top:7px;width:1px;height:9px;background:repeating-linear-gradient(#9a9592 0 1px,transparent 1px 3px)"></div>
<svg class="a" style="left:157px;top:6px" width="11" height="8"><path d="M1.5 6.5 L5.5 2.5 L9.5 6.5" fill="none" stroke="#2b2b2b" stroke-width="1.6"/></svg>
<div class="a" style="left:64px;top:20px;width:545px;height:19px;background:#ffffff"></div>
<div class="a" style="left:64px;top:39px;width:545px;height:1px;background:#b8b1ae"></div>
<div class="t" style="left:0;top:26.0px;width:64px;text-align:center;padding-left:1px;letter-spacing:.4px">Atomo 1</div>
<div class="a" style="left:29px;top:37px;width:7px;height:1px;background:repeating-linear-gradient(90deg,#8f8a87 0 1px,transparent 1px 3px)"></div>
<div class="t" style="left:64px;top:25.5px;width:109px;text-align:center">C3</div>
<div class="t" style="left:173px;top:25.5px;width:109px;text-align:center">C</div>
<div class="t" style="left:282px;top:25.5px;width:109px;text-align:center">4</div>
<div class="t" style="left:391px;top:25.5px;width:104px;text-align:right">0</div>
<div class="t" style="left:499px;top:25.5px;width:108px;text-align:center">-0,032</div>
<div class="a" style="left:64px;top:40px;width:545px;height:18px;background:#f6f5f4"></div>
<div class="a" style="left:64px;top:58px;width:545px;height:1px;background:#b8b1ae"></div>
<div class="t" style="left:0;top:45.5px;width:64px;text-align:center;padding-left:1px;letter-spacing:.4px">Atomo 2</div>
<div class="a" style="left:29px;top:56px;width:7px;height:1px;background:repeating-linear-gradient(90deg,#8f8a87 0 1px,transparent 1px 3px)"></div>
<div class="t" style="left:64px;top:45.0px;width:109px;text-align:center">C3</div>
<div class="t" style="left:173px;top:45.0px;width:109px;text-align:center">C</div>
<div class="t" style="left:282px;top:45.0px;width:109px;text-align:center">4</div>
<div class="t" style="left:391px;top:45.0px;width:104px;text-align:right">0</div>
<div class="t" style="left:499px;top:45.0px;width:108px;text-align:center">0,113</div>
<div class="a" style="left:64px;top:59px;width:545px;height:18px;background:#ffffff"></div>
<div class="a" style="left:64px;top:77px;width:545px;height:1px;background:#b8b1ae"></div>
<div class="t" style="left:0;top:64.5px;width:64px;text-align:center;padding-left:1px;letter-spacing:.4px">Atomo 3</div>
<div class="a" style="left:29px;top:75px;width:7px;height:1px;background:repeating-linear-gradient(90deg,#8f8a87 0 1px,transparent 1px 3px)"></div>
<div class="t" style="left:64px;top:64.0px;width:109px;text-align:center">HC</div>
<div class="t" style="left:173px;top:64.0px;width:109px;text-align:center">H</div>
<div class="t" style="left:282px;top:64.0px;width:109px;text-align:center">1</div>
<div class="t" style="left:391px;top:64.0px;width:104px;text-align:right">0</div>
<div class="t" style="left:499px;top:64.0px;width:108px;text-align:center">0,026</div>
<div class="a" style="left:64px;top:78px;width:545px;height:18px;background:#f6f5f4"></div>
<div class="a" style="left:64px;top:96px;width:545px;height:1px;background:#b8b1ae"></div>
<div class="t" style="left:0;top:83.5px;width:64px;text-align:center;padding-left:1px;letter-spacing:.4px">Atomo 4</div>
<div class="a" style="left:29px;top:94px;width:7px;height:1px;background:repeating-linear-gradient(90deg,#8f8a87 0 1px,transparent 1px 3px)"></div>
<div class="t" style="left:64px;top:83.0px;width:109px;text-align:center">HC</div>
<div class="t" style="left:173px;top:83.0px;width:109px;text-align:center">H</div>
<div class="t" style="left:282px;top:83.0px;width:109px;text-align:center">1</div>
<div class="t" style="left:391px;top:83.0px;width:104px;text-align:right">0</div>
<div class="t" style="left:499px;top:83.0px;width:108px;text-align:center">0,026</div>
<div class="a" style="left:64px;top:97px;width:545px;height:18px;background:#ffffff"></div>
<div class="a" style="left:64px;top:115px;width:545px;height:1px;background:#b8b1ae"></div>
<div class="t" style="left:0;top:102.5px;width:64px;text-align:center;padding-left:1px;letter-spacing:.4px">Atomo 5</div>
<div class="a" style="left:29px;top:113px;width:7px;height:1px;background:repeating-linear-gradient(90deg,#8f8a87 0 1px,transparent 1px 3px)"></div>
<div class="t" style="left:64px;top:102.0px;width:109px;text-align:center">HC</div>
<div class="t" style="left:173px;top:102.0px;width:109px;text-align:center">H</div>
<div class="t" style="left:282px;top:102.0px;width:109px;text-align:center">1</div>
<div class="t" style="left:391px;top:102.0px;width:104px;text-align:right">0</div>
<div class="t" style="left:499px;top:102.0px;width:108px;text-align:center">0,026</div>
<div class="a" style="left:64px;top:116px;width:545px;height:18px;background:#f6f5f4"></div>
<div class="a" style="left:64px;top:134px;width:545px;height:1px;background:#b8b1ae"></div>
<div class="t" style="left:0;top:121.5px;width:64px;text-align:center;padding-left:1px;letter-spacing:.4px">Atomo 6</div>
<div class="a" style="left:29px;top:132px;width:7px;height:1px;background:repeating-linear-gradient(90deg,#8f8a87 0 1px,transparent 1px 3px)"></div>
<div class="t" style="left:64px;top:121.0px;width:109px;text-align:center">C2</div>
<div class="t" style="left:173px;top:121.0px;width:109px;text-align:center">C</div>
<div class="t" style="left:282px;top:121.0px;width:109px;text-align:center">3</div>
<div class="t" style="left:391px;top:121.0px;width:104px;text-align:right">0</div>
<div class="t" style="left:499px;top:121.0px;width:108px;text-align:center">0,187</div>
<div class="a" style="left:64px;top:135px;width:545px;height:18px;background:#ffffff"></div>
<div class="a" style="left:64px;top:153px;width:545px;height:1px;background:#b8b1ae"></div>
<div class="t" style="left:0;top:140.5px;width:64px;text-align:center;padding-left:1px;letter-spacing:.4px">Atomo 7</div>
<div class="a" style="left:29px;top:151px;width:7px;height:1px;background:repeating-linear-gradient(90deg,#8f8a87 0 1px,transparent 1px 3px)"></div>
<div class="t" style="left:64px;top:140.0px;width:109px;text-align:center">O3</div>
<div class="t" style="left:173px;top:140.0px;width:109px;text-align:center">O</div>
<div class="t" style="left:282px;top:140.0px;width:109px;text-align:center">2</div>
<div class="t" style="left:391px;top:140.0px;width:104px;text-align:right">0</div>
<div class="t" style="left:499px;top:140.0px;width:108px;text-align:center">-0,384</div>
<div class="a" style="left:64px;top:154px;width:545px;height:18px;background:#f6f5f4"></div>
<div class="a" style="left:64px;top:172px;width:545px;height:1px;background:#b8b1ae"></div>
<div class="t" style="left:0;top:159.5px;width:64px;text-align:center;padding-left:1px;letter-spacing:.4px">Atomo 8</div>
<div class="a" style="left:29px;top:170px;width:7px;height:1px;background:repeating-linear-gradient(90deg,#8f8a87 0 1px,transparent 1px 3px)"></div>
<div class="t" style="left:64px;top:159.0px;width:109px;text-align:center">HC</div>
<div class="t" style="left:173px;top:159.0px;width:109px;text-align:center">H</div>
<div class="t" style="left:282px;top:159.0px;width:109px;text-align:center">1</div>
<div class="t" style="left:391px;top:159.0px;width:104px;text-align:right">0</div>
<div class="t" style="left:499px;top:159.0px;width:108px;text-align:center">0,067</div>
<div class="a" style="left:64px;top:173px;width:545px;height:17px;background:#ffffff"></div>
<div class="a" style="left:64px;top:190px;width:545px;height:1px;background:#b8b1ae"></div>
<div class="t" style="left:0;top:178.0px;width:64px;text-align:center;padding-left:1px;letter-spacing:.4px">Atomo 9</div>
<div class="a" style="left:29px;top:188px;width:7px;height:1px;background:repeating-linear-gradient(90deg,#8f8a87 0 1px,transparent 1px 3px)"></div>
<div class="t" style="left:64px;top:177.5px;width:109px;text-align:center">C3</div>
<div class="t" style="left:173px;top:177.5px;width:109px;text-align:center">C</div>
<div class="t" style="left:282px;top:177.5px;width:109px;text-align:center">4</div>
<div class="t" style="left:391px;top:177.5px;width:104px;text-align:right">0</div>
<div class="t" style="left:499px;top:177.5px;width:108px;text-align:center">0,108</div>
<div class="a" style="left:64px;top:191px;width:545px;height:17px;background:#f6f5f4"></div>
<div class="a" style="left:64px;top:208px;width:545px;height:1px;background:#b8b1ae"></div>
<div class="t" style="left:0;top:196.0px;width:64px;text-align:center;padding-left:1px;letter-spacing:.4px">Atomo 10</div>
<div class="a" style="left:29px;top:206px;width:7px;height:1px;background:repeating-linear-gradient(90deg,#8f8a87 0 1px,transparent 1px 3px)"></div>
<div class="t" style="left:64px;top:195.5px;width:109px;text-align:center">HC</div>
<div class="t" style="left:173px;top:195.5px;width:109px;text-align:center">H</div>
<div class="t" style="left:282px;top:195.5px;width:109px;text-align:center">1</div>
<div class="t" style="left:391px;top:195.5px;width:104px;text-align:right">0</div>
<div class="t" style="left:499px;top:195.5px;width:108px;text-align:center">0,064</div>
<div class="a" style="left:64px;top:209px;width:545px;height:17px;background:#ffffff"></div>
<div class="a" style="left:64px;top:226px;width:545px;height:1px;background:#b8b1ae"></div>
<div class="t" style="left:0;top:214.0px;width:64px;text-align:center;padding-left:1px;letter-spacing:.4px">Atomo 11</div>
<div class="a" style="left:29px;top:224px;width:7px;height:1px;background:repeating-linear-gradient(90deg,#8f8a87 0 1px,transparent 1px 3px)"></div>
<div class="t" style="left:64px;top:213.5px;width:109px;text-align:center">O3</div>
<div class="t" style="left:173px;top:213.5px;width:109px;text-align:center">O</div>
<div class="t" style="left:282px;top:213.5px;width:109px;text-align:center">2</div>
<div class="t" style="left:391px;top:213.5px;width:104px;text-align:right">0</div>
<div class="t" style="left:499px;top:213.5px;width:108px;text-align:center">-0,372</div>
<div class="a" style="left:64px;top:227px;width:545px;height:17px;background:#f6f5f4"></div>
<div class="a" style="left:64px;top:244px;width:545px;height:1px;background:#b8b1ae"></div>
<div class="t" style="left:0;top:232.0px;width:64px;text-align:center;padding-left:1px;letter-spacing:.4px">Atomo 12</div>
<div class="a" style="left:29px;top:242px;width:7px;height:1px;background:repeating-linear-gradient(90deg,#8f8a87 0 1px,transparent 1px 3px)"></div>
<div class="t" style="left:64px;top:231.5px;width:109px;text-align:center">HC</div>
<div class="t" style="left:173px;top:231.5px;width:109px;text-align:center">H</div>
<div class="t" style="left:282px;top:231.5px;width:109px;text-align:center">1</div>
<div class="t" style="left:391px;top:231.5px;width:104px;text-align:right">0</div>
<div class="t" style="left:499px;top:231.5px;width:108px;text-align:center">0,064</div>
<div class="a" style="left:64px;top:245px;width:545px;height:18px;background:#ffffff"></div>
<div class="t" style="left:0;top:250.5px;width:64px;text-align:center;padding-left:1px;letter-spacing:.4px">Atomo 13</div>
<div class="a" style="left:29px;top:261px;width:7px;height:1px;background:repeating-linear-gradient(90deg,#8f8a87 0 1px,transparent 1px 3px)"></div>
<div class="t" style="left:64px;top:250.0px;width:109px;text-align:center">C3</div>
<div class="t" style="left:173px;top:250.0px;width:109px;text-align:center">C</div>
<div class="t" style="left:282px;top:250.0px;width:109px;text-align:center">4</div>
<div class="t" style="left:391px;top:250.0px;width:104px;text-align:right">0</div>
<div class="t" style="left:499px;top:250.0px;width:108px;text-align:center">0,045</div>
<div class="a" style="left:64px;top:19px;width:1px;height:241px;background:#aaa29f"></div>
<div class="a" style="left:173px;top:20px;width:1px;height:241px;background:#b8b1ae"></div>
<div class="a" style="left:282px;top:20px;width:1px;height:241px;background:#b8b1ae"></div>
<div class="a" style="left:391px;top:20px;width:1px;height:241px;background:#b8b1ae"></div>
<div class="a" style="left:499px;top:20px;width:1px;height:241px;background:#b8b1ae"></div>
<div class="a" style="left:67px;top:37px;width:104px;height:1px;background:linear-gradient(90deg,rgba(0,0,0,0),#1a1a1a 30%,#1a1a1a 70%,rgba(0,0,0,0))"></div>
</div>
<svg class="a" style="left:921px;top:472px" width="13" height="9"><path d="M2 7 L6.5 2.5 L11 7" fill="none" stroke="#9c9693" stroke-width="1.3"/></svg>
<div class="a" style="left:921px;top:484px;width:13px;height:220px;border-radius:4px;background:linear-gradient(90deg,#a9a09d,#b9b0ad 50%,#aaa19e);box-shadow:inset 0 1px 2px rgba(0,0,0,.35)"></div>
<div class="a" style="left:922px;top:485px;width:11px;height:132px;border-radius:3px;background:linear-gradient(90deg,#dcd9d6,#ecebea 50%,#dcd9d6);box-shadow:0 0 0 1.5px #7a7573,inset 0 1px 0 #fff"></div>
<svg class="a" style="left:921px;top:707px" width="13" height="9"><path d="M2 7 L6.5 2.5 L11 7" fill="none" stroke="#9c9693" stroke-width="1.3"/></svg>
<svg class="a" style="left:921px;top:720px" width="13" height="9"><path d="M2 2.5 L6.5 7 L11 2.5" fill="none" stroke="#2b2b2b" stroke-width="1.6"/></svg>
<svg class="a" style="left:520px;top:458px" width="22" height="27" viewBox="0 0 22 27"><defs><radialGradient id="curg" cx=".4" cy=".7" r=".7"><stop offset="0" stop-color="#fafafa"/><stop offset="1" stop-color="#c4c4c4"/></radialGradient></defs><path d="M5.6 4.3 L5.6 20.6 Q5.8 21.6 7 21.4 L9.5 21.6 L12.8 23.8 L17.8 16.6 Z" fill="url(#curg)" stroke="#111" stroke-width="1.1" stroke-linejoin="round"/></svg>
<div class="a" style="left:936px;top:588px;width:1px;height:8px;background:repeating-linear-gradient(#8c8683 0 1px,transparent 1px 3px)"></div>
<svg class="a" style="left:930px;top:729px" width="8" height="8"><circle cx="6" cy="2" r=".6" fill="#777"/><circle cx="4" cy="4" r=".6" fill="#777"/><circle cx="6" cy="4" r=".6" fill="#777"/><circle cx="2" cy="6" r=".6" fill="#777"/><circle cx="4" cy="6" r=".6" fill="#777"/><circle cx="6" cy="6" r=".6" fill="#777"/></svg>
<!-- ===== Taskbar ===== -->
<div class="a" style="left:0;top:760px;width:1280px;height:40px;background:linear-gradient(#c5bcba 0,#a8a09d 1px,#a8a09d 2px,#e8e8e8 2px,#e8e8e8 3px,#a3a1a0 4px,#999796 12px,#868483 30px,#7c7a79 40px)"></div>
<svg class="a" style="left:0;top:763px" width="36" height="37" viewBox="0 0 36 37">
<defs><radialGradient id="kb" cx=".5" cy=".5" r=".6"><stop offset="0" stop-color="#4f86e0"/><stop offset=".65" stop-color="#3a70d4"/><stop offset="1" stop-color="#1640a8"/></radialGradient></defs>
<rect x="1.2" y="2" width="33" height="33" rx="5" fill="url(#kb)"/>
<rect x="1.7" y="2.5" width="32" height="32" rx="4.5" fill="none" stroke="#1a3fa0" stroke-width="1"/>
<path d="M4 5 Q18 3.5 32 5 V15 Q18 12 4 16 Z" fill="#fff" opacity=".16"/>
<path d="M20.5 13.5 A6.9 6.9 0 1 0 23.5 22" fill="none" stroke="#f2f2f0" stroke-width="2.6"/>
<rect x="10.30" y="10.78" width="4" height="4" transform="rotate(-125.0 12.30 12.78)" fill="#f2f2f0"/><rect x="6.80" y="17.50" width="4" height="4" transform="rotate(-180.0 8.80 19.50)" fill="#f2f2f0"/><rect x="10.30" y="24.22" width="4" height="4" transform="rotate(-235.0 12.30 26.22)" fill="#f2f2f0"/><rect x="17.80" y="25.21" width="4" height="4" transform="rotate(-290.0 19.80 27.21)" fill="#f2f2f0"/>
<rect x="15.2" y="7" width="3.8" height="16.5" fill="#f4f4f2"/>
<path d="M18.8 14.8 L25.3 7.4 H30 L22 16.6 L30 24 H25 L18.8 18.6 Z" fill="#f4f4f2"/>
</svg>
<svg class="a" style="left:42px;top:778px" width="30" height="12" viewBox="0 0 30 12">
<defs>
<radialGradient id="dr" fx=".4" fy=".35"><stop offset="0" stop-color="#ff8080"/><stop offset="1" stop-color="#b00000"/></radialGradient>
<radialGradient id="db" fx=".4" fy=".35"><stop offset="0" stop-color="#80b0ff"/><stop offset="1" stop-color="#0040b0"/></radialGradient>
<radialGradient id="dg" fx=".4" fy=".35"><stop offset="0" stop-color="#a0f080"/><stop offset="1" stop-color="#208010"/></radialGradient></defs>
<circle cx="5.5" cy="6" r="4" fill="url(#dr)"/><circle cx="14.2" cy="6" r="4" fill="url(#db)"/><circle cx="23" cy="6" r="4" fill="url(#dg)"/></svg>
<svg class="a" style="left:78px;top:766px" width="36" height="32" viewBox="0 0 36 32">
<path d="M1.5 2 H11 L13 4 H24.5 V27 H1.5 Z" fill="#5b8fd0"/>
<rect x="1" y="5" width="32" height="23" fill="#8db4e6"/>
<rect x="1" y="5" width="32" height="3" fill="#6d9ad6"/>
<rect x="1" y="18" width="32" height="2" fill="#5f8fd0"/>
<rect x="1" y="26" width="32" height="2" fill="#6a98d4"/>
<path d="M28 19 L30.3 23.5 L35 24 L31.5 27.3 L32.5 32 L28 29.6 L23.5 32 L24.5 27.3 L21 24 L25.7 23.5 Z" fill="#ffd84a" stroke="#d49a10" stroke-width=".8"/>
</svg>
<svg class="a" style="left:118px;top:770px" width="34" height="26" viewBox="0 0 34 26">
<defs><linearGradient id="dsk" x1="0" y1="0" x2="1" y2="1"><stop offset="0" stop-color="#3e78b8"/><stop offset="1" stop-color="#0f2e6a"/></linearGradient></defs>
<rect x="1" y="1" width="32" height="23.5" fill="url(#dsk)"/>
<path d="M1 20 Q18 16 33 4 V24.5 H1 Z" fill="#0d2a5e" opacity=".7"/>
<path d="M1 10 Q16 9 33 6 M1 14 Q18 12 33 9" stroke="#7aa8dc" stroke-width=".6" fill="none" opacity=".7"/>
<rect x="3" y="5" width="2.5" height="2.5" fill="#f0f0d0"/><rect x="3" y="10" width="2.5" height="2.5" fill="#e8e880"/>
<rect x="1" y="22" width="32" height="2.5" fill="#101010"/><rect x="2" y="22.5" width="2" height="1.5" fill="#fff"/>
</svg>
<div class="a" style="left:158px;top:768px;width:70px;height:28px;border-radius:5px;background:linear-gradient(#7f7d7c,#8b8988);box-shadow:inset 0 1px 3px rgba(0,0,0,.45),0 1px 0 rgba(255,255,255,.25)"></div>
<svg class="a" style="left:183px;top:771px" width="20" height="18" viewBox="0 0 20 18"><ellipse cx="10" cy="9.2" rx="8.8" ry="3.3" transform="rotate(42 10 9.2)" fill="#ff9a30" fill-opacity=".35" stroke="#ff6a00" stroke-width="1.7"/>
<ellipse cx="10" cy="9.2" rx="8.8" ry="3.3" transform="rotate(-42 10 9.2)" fill="#ff9a30" fill-opacity=".35" stroke="#ff6a00" stroke-width="1.7"/>
<circle cx="10" cy="4" r="2.3" fill="#000"/>
<path d="M8.2 7 L4 15.8 H7 L8.6 12 H11.4 L13 15.8 H16 L11.8 7 Z" fill="#000"/>
<circle cx="10" cy="9.3" r="1.1" fill="#fff"/>
<circle cx="5" cy="4.8" r="1.1" fill="#ffc020"/><circle cx="15.2" cy="7.5" r="1.1" fill="#ffc020"/></svg>
<svg class="a" style="left:217px;top:774px" width="7" height="5"><path d="M1 4 L3.5 1.5 L6 4" fill="none" stroke="#1a1a1a" stroke-width="1.2"/></svg>
<div class="t" style="left:217px;top:780px;font-size:11px;color:#111">2</div>
<div class="a" style="left:232px;top:768px;width:69px;height:28px;border-radius:5px;border:1px solid #737170;background:linear-gradient(#a19f9e,#8e8c8b);box-shadow:inset 0 0 0 1px rgba(255,255,255,.22),0 1px 0 rgba(255,255,255,.15)"></div>
<svg class="a" style="left:259px;top:773px" width="16" height="16" viewBox="0 0 16 16">
<circle cx="8" cy="8" r="7" fill="#5b9ad8"/><path d="M8 1 A7 7 0 0 1 14.5 10.5 L10.5 8 Z" fill="#a8c8ec"/><path d="M1.5 10 A7 7 0 0 0 12 14 L9.5 10 Z" fill="#c8dcf0"/>
<circle cx="8" cy="8" r="3.6" fill="#e8f0f8"/><circle cx="8" cy="8" r="2.6" fill="#2f7ad8"/></svg>
<div class="a" style="left:306px;top:768px;width:70px;height:28px;border-radius:5px;border:1px solid #74c8e8;background:linear-gradient(#d8d6d5,#aba9a8 55%,#8e8c8b);box-shadow:0 0 1px #9fe0f4,inset 0 0 0 1px rgba(255,255,255,.35)"></div>
<svg class="a" style="left:332px;top:772px" width="18" height="18" viewBox="0 0 18 18">
<circle cx="9" cy="7" r="6" fill="#e01010"/><rect x="1" y="10" width="15.5" height="6" fill="#fff"/>
<text x="1.5" y="15.5" font-family="Liberation Sans" font-size="6.5" fill="#1a3ea8" font-weight="bold">cpng</text>
<text x="4" y="8.5" font-family="Liberation Sans" font-size="5" fill="#fff">sv</text></svg>
<div class="a" style="left:380px;top:768px;width:69px;height:28px;border-radius:5px;border:1px solid #737170;background:linear-gradient(#a19f9e,#8e8c8b);box-shadow:inset 0 0 0 1px rgba(255,255,255,.22),0 1px 0 rgba(255,255,255,.15)"></div>
<svg class="a" style="left:406px;top:772px" width="16" height="17" viewBox="0 0 16 17">
<rect x="1" y="1" width="14" height="15" rx="2" fill="#eef0f2" stroke="#5a5a5a" stroke-width=".6"/>
<rect x="2.5" y="4" width="11" height="5" fill="#3a82e0"/><rect x="2.5" y="10" width="11" height="5" fill="#3a82e0"/>
<rect x="6" y="4" width="4" height="1.3" fill="#f4f4f4"/><rect x="6" y="10" width="4" height="1.3" fill="#f4f4f4"/></svg>
<svg class="a" style="left:440px;top:774px" width="7" height="5"><path d="M1 4 L3.5 1.5 L6 4" fill="none" stroke="#1a1a1a" stroke-width="1.2"/></svg>
<div class="t" style="left:440px;top:780px;font-size:11px;color:#111">6</div>
<div class="a" style="left:454px;top:768px;width:70px;height:28px;border-radius:5px;border:1px solid #74c8e8;background:linear-gradient(#d8d6d5,#aba9a8 55%,#8e8c8b);box-shadow:0 0 1px #9fe0f4,inset 0 0 0 1px rgba(255,255,255,.35)"></div>
<svg class="a" style="left:480px;top:772px" width="18" height="18" viewBox="0 0 18 18">
<defs><radialGradient id="ffx" cx=".6" cy=".4" r=".6"><stop offset="0" stop-color="#4aa0f0"/><stop offset="1" stop-color="#1a4aa0"/></radialGradient></defs>
<circle cx="10" cy="8" r="6" fill="url(#ffx)"/>
<path d="M2.5 5 Q2 13 9 16 Q15.5 16.5 16.5 10 Q15 14 10 13.5 Q6 12.5 7 8.5 Q5 9 5.5 5.5 Q3.5 6.5 2.5 5 Z" fill="#ea6a10"/>
<path d="M3 4 L5 1.5 L6.5 4.5 Z" fill="#f08a20"/></svg>
<div class="a" style="left:528px;top:768px;width:70px;height:28px;border-radius:5px;border:1px solid #737170;background:linear-gradient(#a19f9e,#8e8c8b);box-shadow:inset 0 0 0 1px rgba(255,255,255,.22),0 1px 0 rgba(255,255,255,.15)"></div>
<svg class="a" style="left:554px;top:773px" width="18" height="16" viewBox="0 0 18 16">
<rect x="1" y="1.5" width="11" height="11" fill="#f2f2f4" stroke="#9a9a9a" stroke-width=".5"/><rect x="1" y="12.5" width="11" height="1.8" fill="#2a3a4a"/>
<path d="M5 11 L15.5 0.5" stroke="#505050" stroke-width="1.2"/><path d="M3 5 H8 M3 7 H7" stroke="#c8c8d0" stroke-width=".6"/></svg>
<div class="a" style="left:602px;top:768px;width:69px;height:28px;border-radius:5px;border:1px solid #737170;background:linear-gradient(#a19f9e,#8e8c8b);box-shadow:inset 0 0 0 1px rgba(255,255,255,.22),0 1px 0 rgba(255,255,255,.15)"></div>
<svg class="a" style="left:629px;top:772px" width="16" height="16" viewBox="0 0 16 16">
<rect x=".5" y=".5" width="15" height="14" rx="1.5" fill="#e6e6e6" stroke="#3a3a3a" stroke-width=".7"/>
<rect x="2" y="2" width="12" height="10" fill="#1e1e1e"/><path d="M3 3.5 L5 4.8 L3 6 M5.5 6.5 H7.5" stroke="#fff" stroke-width=".8" fill="none"/>
<rect x="2" y="12.8" width="12" height=".8" fill="#9a9a9a"/></svg>
<svg class="a" style="left:662px;top:774px" width="7" height="5"><path d="M1 4 L3.5 1.5 L6 4" fill="none" stroke="#1a1a1a" stroke-width="1.2"/></svg>
<div class="t" style="left:662px;top:780px;font-size:11px;color:#111">2</div>
<div class="a" style="left:676px;top:768px;width:70px;height:28px;border-radius:5px;border:1px solid #737170;background:linear-gradient(#a19f9e,#8e8c8b);box-shadow:inset 0 0 0 1px rgba(255,255,255,.22),0 1px 0 rgba(255,255,255,.15)"></div>
<svg class="a" style="left:703px;top:773px" width="16" height="15" viewBox="0 0 16 15">
<rect x=".5" y=".5" width="15" height="14" rx="1.5" fill="#f0f0f0" stroke="#3a3a3a" stroke-width=".7"/>
<rect x="2" y="2" width="10" height="10.5" fill="#2a2a2a"/><path d="M2.5 10 L4.5 7 L6.5 9 L8.5 6 L10.5 8.5 L11.5 7 V12 H2.5 Z" fill="#9a9a30"/>
<rect x="13" y="3" width="1" height="9" fill="#8a8a8a"/></svg>
<div class="a" style="left:750px;top:768px;width:69px;height:28px;border-radius:5px;border:1px solid #737170;background:linear-gradient(#a19f9e,#8e8c8b);box-shadow:inset 0 0 0 1px rgba(255,255,255,.22),0 1px 0 rgba(255,255,255,.15)"></div>
<svg class="a" style="left:776px;top:772px" width="16" height="18" viewBox="0 0 16 18">
<path d="M3 1 H11 L15 5 V17 H3 Z" fill="#e8eef4" stroke="#7a9ab8" stroke-width=".6"/><path d="M1.5 3.5 L5 1 L8 4 L3 7 Z" fill="#c8d8e8"/>
<rect x="5" y="9" width="8" height="1.4" fill="#6a8aa8"/><rect x="5" y="12" width="8" height="1.4" fill="#6a8aa8"/><rect x="2.5" y="5" width="2" height="11.5" fill="#4a7aa8"/></svg>
<div class="a" style="left:828px;top:767px;width:23px;height:14px;border-radius:2px;background:linear-gradient(#8e8c8b,#6e6c6b);box-shadow:0 0 0 1px #d8d6d5"></div>
<div class="a" style="left:833px;top:775px;width:13px;height:5px;background:#555352;box-shadow:0 0 0 1px #6a6867"></div>
<div class="a" style="left:855px;top:767px;width:23px;height:14px;border-radius:1px;background:linear-gradient(#a8a6a5,#8f8d8c);box-shadow:0 0 0 1px #6f6d6c,0 1px 0 1px rgba(255,255,255,.25)"></div>
<div class="a" style="left:828px;top:785px;width:23px;height:13px;border-radius:1px;background:linear-gradient(#a8a6a5,#8f8d8c);box-shadow:0 0 0 1px #6f6d6c,0 1px 0 1px rgba(255,255,255,.25)"></div>
<div class="a" style="left:855px;top:785px;width:23px;height:13px;border-radius:1px;background:linear-gradient(#a8a6a5,#8f8d8c);box-shadow:0 0 0 1px #6f6d6c,0 1px 0 1px rgba(255,255,255,.25)"></div>
<svg class="a" style="left:885px;top:768px" width="270" height="30" viewBox="885 768 270 30">
<defs><radialGradient id="inf" fx=".45" fy=".35"><stop offset="0" stop-color="#d6d4d3"/><stop offset="1" stop-color="#a4a2a1"/></radialGradient>
<linearGradient id="prn" x1="0" y1="0" x2="0" y2="1"><stop offset="0" stop-color="#f8f8f8"/><stop offset="1" stop-color="#b8b8b8"/></linearGradient></defs>
<circle cx="897.5" cy="782.5" r="10" fill="url(#inf)"/>
<circle cx="898" cy="776.5" r="1.5" fill="#fafafa"/><path d="M895 779.5 H899 V787 H901 V789 H894.5 V787 H896.5 V781.5 H895 Z" fill="#fafafa"/>
<rect x="912" y="769" width="1" height="27" fill="#6e6c6b"/><rect x="913" y="769" width="1" height="27" fill="#a8a6a5"/>
<rect x="917" y="776.5" width="19" height="13" fill="#f4f4f4" stroke="#2a2a2a" stroke-width="1"/>
<path d="M917.5 777 L926.5 784 L935.5 777" fill="none" stroke="#444" stroke-width="1.3"/>
<rect x="948" y="772" width="14" height="6" fill="#f4f4f4" stroke="#999" stroke-width=".5"/>
<rect x="944" y="778" width="22" height="8" rx="2" fill="url(#prn)" stroke="#666" stroke-width=".6"/>
<rect x="947" y="783" width="16" height="2" fill="#333"/>
<rect x="948" y="786" width="14" height="6" fill="#fafafa" stroke="#999" stroke-width=".5"/>
<path d="M970 779 H974 L980 773 V793 L974 787 H970 Z" fill="#eaeaea" stroke="#555" stroke-width=".7"/>
<rect x="970" y="779.5" width="3.5" height="7" fill="#f0a810"/>
<path d="M983 779 Q985 783 983 787 M986 776 Q989.5 783 986 790" fill="none" stroke="#40c040" stroke-width="1.2"/>
<rect x="997" y="773" width="15" height="18" rx="1" fill="#f4c020" stroke="#b08000" stroke-width=".6"/>
<rect x="1001" y="771.5" width="7" height="3" rx="1" fill="#d8d8d8" stroke="#777" stroke-width=".5"/>
<path d="M1002 777 H1013 L1017 781 V792 H1002 Z" fill="#f8f8f8" stroke="#999" stroke-width=".6"/>
<path d="M1031 777 L1035 786 M1027 789 L1035 786 L1039 779" stroke="#a0b8c8" stroke-width="1.2"/>
<circle cx="1030.5" cy="775.5" r="3.3" fill="#e050e0"/><circle cx="1035" cy="786" r="4.3" fill="#30a8f0" stroke="#1a6aa8" stroke-width=".6"/>
<circle cx="1025.5" cy="790" r="2.2" fill="#70d040"/><circle cx="1039.5" cy="779" r="1.3" fill="#f0c020"/>
<rect x="1053" y="772" width="15" height="10" fill="#2a2a2a" stroke="#aaa" stroke-width=".5"/>
<rect x="1048" y="777" width="15" height="10" fill="#1a1a1a" stroke="#ccc" stroke-width=".6"/>
<rect x="1049.5" y="778.5" width="12" height="6" fill="#2e4050"/>
<rect x="1049" y="789" width="16" height="2" fill="#3a3a3a"/>
<path d="M1064 786 L1067 791 H1061 Z" fill="#4a9ae8"/>
<circle cx="1085" cy="782.8" r="10.3" fill="none" stroke="#e8e8e8" stroke-width="1.6"/>
<path d="M1077 783 H1093 M1081 783 L1085 778 H1090 M1081 783 L1085 788 H1089" fill="none" stroke="#efefef" stroke-width="1.5"/>
<circle cx="1077.5" cy="783" r="1.8" fill="#efefef"/><path d="M1093 781 L1096 783 L1093 785 Z" fill="#efefef"/>
<rect x="1107" y="773" width="12" height="20" rx="1.5" fill="#1c1c1c"/>
<rect x="1108.5" y="775" width="9" height="8" fill="#3a9ae8"/>
<path d="M1109 785.5 H1117 M1109 788 H1117 M1109 790.5 H1117" stroke="#777" stroke-width=".8" stroke-dasharray="1.5 1"/>
<path d="M1132 785 L1138 778 L1144 785 Z" fill="#f2f2f2"/>
</svg>
<div class="t" style="left:1151px;top:763px;font-size:27.5px;color:#ececec;text-shadow:0 0 2px rgba(60,60,60,.6);letter-spacing:-.3px">19:54</div>
<div class="a" style="left:1149px;top:768px;width:71px;height:29px;border:1px solid rgba(120,120,190,.35);border-left:none;border-top:none"></div>
<div class="t" style="left:1160px;top:788px;font-size:11px;color:#262626;letter-spacing:.4px">11/8/2011</div>
<svg class="a" style="left:1225px;top:764px" width="32" height="35" viewBox="0 0 32 35">
<defs><linearGradient id="tr" x1="0" y1="0" x2="1" y2="0"><stop offset="0" stop-color="#cfcfcf"/><stop offset=".35" stop-color="#fdfdfd"/><stop offset="1" stop-color="#b8b8b8"/></linearGradient></defs>
<path d="M3 7 L5 32 Q15 35 26 32 L28 7 Z" fill="url(#tr)" stroke="#8a8a8a" stroke-width=".6"/>
<ellipse cx="15.5" cy="7" rx="12.5" ry="4" fill="#e4e4e4" stroke="#9a9a9a" stroke-width=".6"/>
<path d="M12 9 L20 0.5" stroke="#222" stroke-width="2.5"/><path d="M13 8 L20.5 0.5" stroke="#f0b020" stroke-width="1"/>
</svg>
<svg class="a" style="left:1256px;top:764px" width="24" height="36" viewBox="0 0 24 36">
<circle cx="25" cy="19" r="19" fill="#aeacab" stroke="#d0cecd" stroke-width="1.2"/>
<path d="M8 17 Q10 9 18 9" fill="none" stroke="#c8c6c5" stroke-width="3"/></svg>

</body></html>
